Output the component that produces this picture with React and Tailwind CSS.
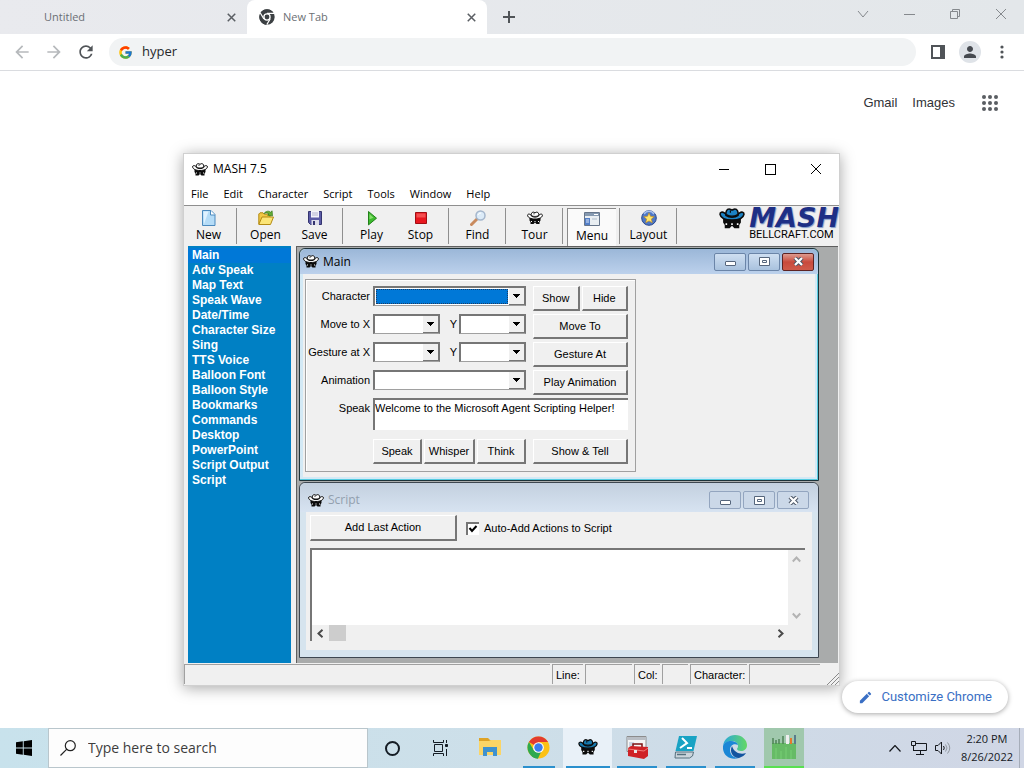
import { useState } from 'react';
import { FcGoogle } from 'react-icons/fc';
import { MdArrowBack, MdArrowForward, MdEdit, MdPerson, MdRefresh } from 'react-icons/md';

const MENU_ITEMS = ['File', 'Edit', 'Character', 'Script', 'Tools', 'Window', 'Help'];

const SECTIONS = [
    'Main', 'Adv Speak', 'Map Text', 'Speak Wave', 'Date/Time', 'Character Size', 'Sing', 'TTS Voice',
    'Balloon Font', 'Balloon Style', 'Bookmarks', 'Commands', 'Desktop', 'PowerPoint', 'Script Output', 'Script',
];

// spy with a wide hat and dark glasses
const AgentIcon = ({ className, fill = '#ffffff' }) => (
    <svg className={className} viewBox="0 0 32 26" aria-hidden="true">
        <path d="M5 13h22v5l-2 3v4h-6l-3-3-3 3H7v-4l-2-3z" fill="#0b0b0b" />
        <path d="M8 19h2v2H8zM22 19h2v2h-2zM15 19h2v2h-2z" fill="#fff" />
        <path
            d="M1.200 8C1 5 4 4.500 6.500 6L9 8c4 3 10 3 14 0l2.500-2C28 4.500 31 5 30.800 8 30 12.500 24 15 16 15S2 12.500 1.200 8Z"
            fill={fill}
            stroke="#0b0b0b"
            strokeWidth="2"
        />
        <path
            d="M8.500 9C8 4.500 9.500 1.200 12.500 1.200c1.500 0 2 1.300 3.500 1.300s2-1.300 3.500-1.300c3 0 4.500 3.300 4 7.800-4 3-11 3-15 0Z"
            fill={fill}
            stroke="#0b0b0b"
            strokeWidth="2"
        />
        <path d="M9 8c4 2.500 10 2.500 14 0M14 3v3" fill="none" stroke="#0b0b0b" strokeWidth="1.500" />
    </svg>
);

const CrossIcon = ({ className }) => (
    <svg className={className} viewBox="0 0 12 12" fill="none" stroke="currentColor" aria-hidden="true">
        <path d="M1 1 11 11M11 1 1 11" />
    </svg>
);

const ChromeIcon = ({ className, mono }) => (
    <svg className={className} viewBox="0 0 24 24" aria-hidden="true">
        <circle cx="12" cy="12" r="11.5" fill={mono ? '#3c4043' : '#fbc116'} />
        <path d="M12 12 2 6.3A11.5 11.5 0 0 1 22 6.3H12Z" fill={mono ? '#3c4043' : '#e33b2e'} />
        <path d="M2 6.3 7.3 15 12 17 11.5 23.5A11.5 11.5 0 0 1 2 6.3Z" fill={mono ? '#3c4043' : '#2da94f'} />
        <path d="M7.3 15 12 17.5 15 16 11.4 23.5A11 11 0 0 1 5 21Z" fill={mono ? '#3c4043' : '#2da94f'} />
        {mono && <path d="M12 6.5h10.5M7.3 15 2 6M16.7 15l-5 8.5" stroke="#fff" strokeWidth="1.8" />}
        <circle cx="12" cy="12" r="5.6" fill="#fff" />
        <circle cx="12" cy="12" r={mono ? 3.6 : 4.4} fill={mono ? '#3c4043' : '#3b7ded'} />
    </svg>
);

const BrowserTab = ({ title, active, children }) => (
    <div className={`flex h-[34px] items-center pr-2 text-[11px] text-[#6b6f74] ${active ? 'w-60 rounded-t-lg bg-white pl-3' : 'w-[247px] pl-11'}`}>
        {children}
        <span className="flex-1">{title}</span>
        <button type="button" aria-label={`Close ${title}`} className="flex size-4 items-center justify-center text-[#5a5e63]">
            <CrossIcon className="size-[9px] stroke-2" />
        </button>
    </div>
);

const TabStrip = () => (
    <div className="flex h-[34px] bg-gradient-to-r from-[#e9eaee] to-[#e3e7ea]">
        <BrowserTab title="Untitled" />
        <BrowserTab title="New Tab" active>
            <ChromeIcon className="mr-2 size-4" mono />
        </BrowserTab>
        <button type="button" aria-label="New tab" className="ml-3 flex w-5 items-center justify-center text-[#505458]">
            <svg className="size-3" viewBox="0 0 12 12" stroke="currentColor" strokeWidth="2"><path d="M6 0v12M0 6h12" /></svg>
        </button>
        <div className="ml-auto flex h-7 text-[#85898d]">
            <button type="button" aria-label="Search tabs" className="flex w-[46px] items-center justify-center">
                <svg className="size-3" viewBox="0 0 12 12" fill="none" stroke="currentColor"><path d="m1 3 5 6 5-6" /></svg>
            </button>
            <button type="button" aria-label="Minimize" className="flex w-[46px] items-center justify-center">
                <span className="h-px w-[11px] bg-[#85898d]" />
            </button>
            <button type="button" aria-label="Restore" className="flex w-[46px] items-center justify-center">
                <svg className="size-3" viewBox="0 0 12 12" fill="none" stroke="currentColor"><path d="M1.5 3.5h7v7h-7zM3.5 3.5v-2h7v7h-2" /></svg>
            </button>
            <button type="button" aria-label="Close" className="flex w-[46px] items-center justify-center">
                <CrossIcon className="size-3" />
            </button>
        </div>
    </div>
);

const AddressBar = () => {
    const [query, setQuery] = useState('hyper');

    return (
        <div className="flex h-[37px] items-center border-b border-[#dadce0] bg-white pl-3 pr-[14px]">
            <button type="button" aria-label="Back" className="w-8 text-[#b6b9bc]"><MdArrowBack size={20} /></button>
            <button type="button" aria-label="Forward" className="w-8 text-[#b6b9bc]"><MdArrowForward size={20} /></button>
            <button type="button" aria-label="Reload" className="w-[33px] text-[#505458]"><MdRefresh size={20} /></button>
            <label className="flex h-7 flex-1 items-center gap-[9px] rounded-full bg-[#f1f3f4] pl-[9px]">
                <FcGoogle size={15} aria-label="Google" />
                <input
                    aria-label="Address and search bar"
                    className="min-w-0 flex-1 bg-transparent text-[13px] text-[#26282b] outline-none"
                    value={query}
                    onChange={(e) => setQuery(e.target.value)}
                />
            </label>
            <button type="button" aria-label="Side panel" className="ml-[15px] text-[#505458]">
                <svg className="size-[14px]" viewBox="0 0 14 14"><path d="M0 0h14v14H0zM2 2v10h7V2z" fill="currentColor" fillRule="evenodd" /></svg>
            </button>
            <button type="button" aria-label="Profile" className="ml-[14px] flex size-[22px] items-center justify-center rounded-full bg-[#dfe3e8] text-[#464a50]">
                <MdPerson size={18} />
            </button>
            <button type="button" aria-label="More" className="ml-[13px] flex w-4 flex-col items-center gap-0.5 text-[#505458]">
                <svg className="h-[14px] w-1" viewBox="0 0 4 14" fill="currentColor"><circle cx="2" cy="2" r="1.6" /><circle cx="2" cy="7" r="1.6" /><circle cx="2" cy="12" r="1.6" /></svg>
            </button>
        </div>
    );
};

/* ---------- toolbar ---------- */

const NewIcon = () => (
    <svg className="h-4 w-4" viewBox="0 0 16 16"><path d="M1.5 .5h8.5l4 4v11H1.5z" fill="#b5dcf7" stroke="#4b89bd" /><path d="M2.500 1.500h5L3 14z" fill="#e0f2ff" /><path d="M9.500 .5v4.500h4.500" fill="#fff" stroke="#4b89bd" /></svg>
);
const OpenIcon = () => (
    <svg className="h-4 w-4" viewBox="0 0 16 16"><path d="M.8 14V4l1.200-1.200h3l1.300 1.400H12v4" fill="#f0c845" stroke="#b38a12" /><path d="M.8 14.500 4 7h11.500l-3 7.500z" fill="#fbe577" stroke="#b38a12" /><path d="M6 3.500C8 .8 11 .6 12.600 2.200l1.500-1.400.4 5-4.800-.5L11 4C9.800 2.800 8 2.600 6 3.500Z" fill="#63ad35" stroke="#35781a" strokeWidth=".7" /></svg>
);
const SaveIcon = () => (
    <svg className="h-4 w-4" viewBox="0 0 16 16"><path d="M1.500 1.500h13v13h-11l-2-2z" fill="#5b5ba6" stroke="#34346f" /><path d="M4 1h8v6.500H4z" fill="#f3f3fb" /><path d="M5 3h6M5 5h6" stroke="#b2b2ce" /><path d="M4.500 10h7.500v5H4.500z" fill="#dedeea" /><path d="M6 11h2v4H6z" fill="#34346f" /></svg>
);
const PlayIcon = () => (
    <svg className="h-4 w-4" viewBox="0 0 16 16"><path d="m4.500 1.500 8 6.700-8 6.700z" fill="#3dbb2e" stroke="#22801a" /><path d="m5.500 4 4 3.800-4 1.500z" fill="#86df6c" /></svg>
);
const StopIcon = () => (
    <svg className="h-4 w-4" viewBox="0 0 16 16"><path d="M2.500 2.500h11v11h-11z" fill="#e8171f" stroke="#a20d12" /><path d="M3.500 3.500h9v4h-9z" fill="#f44f50" /></svg>
);
const FindIcon = () => (
    <svg className="h-4 w-4" viewBox="0 0 16 16"><path d="m1.500 14.500 6-6" stroke="#c98a5d" strokeWidth="3" strokeLinecap="round" /><circle cx="10.500" cy="5.500" r="4.500" fill="#dcebf8" stroke="#a4b6cc" strokeWidth="1.500" /><path d="M8 5a3 3 0 0 1 3-2" stroke="#fff" fill="none" /></svg>
);
const MenuIcon = () => (
    <svg className="h-4 w-4" viewBox="0 0 16 16"><path d="M.5 1.500h15v13H.5z" fill="#e9eef2" stroke="#66758a" /><path d="M1 2h14v3H1z" fill="#8599b0" /><path d="M10 3.500h4" stroke="#fff" /><path d="M1 7h5v7H1z" fill="#527ec6" /><path d="M2 9h3M2 11h3" stroke="#dbe6fa" /><path d="M8 8h5" stroke="#aebdcc" /></svg>
);
const LayoutIcon = () => (
    <svg className="h-4 w-4" viewBox="0 0 16 16"><circle cx="8" cy="8" r="7.300" fill="#4e78c7" stroke="#28488e" /><path d="M3 4a6 6 0 0 1 10 0" stroke="#a9c2ee" strokeWidth="1.500" fill="none" /><path d="m8 2.800 1.500 3.500 3.800.3-2.900 2.500.9 3.700L8 10.900l-3.300 1.900.9-3.700L2.700 6.600l3.800-.3z" fill="#ffe56a" stroke="#b7821c" strokeWidth=".6" /></svg>
);

const TOOL_GROUPS = [
    [['New', <NewIcon />]],
    [['Open', <OpenIcon />], ['Save', <SaveIcon />]],
    [['Play', <PlayIcon />], ['Stop', <StopIcon />]],
    [['Find', <FindIcon />]],
    [['Tour', <AgentIcon className="h-4 w-4" />]],
    [['Menu', <MenuIcon />]],
    [['Layout', <LayoutIcon />]],
];

const Toolbar = () => (
    <div className="flex h-[41px] border-t border-[#8f8f8f] bg-[#f0f0f0]">
        {TOOL_GROUPS.map((group, i) => (
            <div key={i} className="flex">
                {group.map(([label, icon]) => (
                    <button
                        key={label}
                        type="button"
                        className={`flex w-[49px] flex-col items-center gap-px text-xs leading-4 ${label === 'Menu' ? 'mt-0.5 border-l border-t border-[#8a8a8a] bg-[#fafafa] pt-0.5' : 'pt-1'}`}
                    >
                        {icon}
                        {label}
                    </button>
                ))}
                <div className="my-0.5 ml-[3px] mr-1 w-px bg-[#8f8f8f]" />
            </div>
        ))}
        <div className="ml-auto flex gap-1">
            <AgentIcon className="mt-0.5 h-[21px] w-[26px]" fill="#1c82c4" />
            <div className="flex flex-col">
                <span className="h-[23px] font-['DejaVu_Sans'] text-[27px] font-bold italic leading-6 text-[#1e2f85] [text-shadow:1px_1px_1px_#7f9ac8]">MASH</span>
                <span className="font-[Roboto] text-[11px] leading-3">BELLCRAFT.COM</span>
            </div>
        </div>
    </div>
);

/* ---------- form pieces ---------- */

const Raised = ({ children, className = '' }) => (
    <button
        type="button"
        className={`border-b-2 border-l border-r-2 border-t border-b-[#767676] border-l-white border-r-[#767676] border-t-white bg-[#f0f0f0] ${className}`}
    >
        {children}
    </button>
);

const Combo = ({ id, label, className = '', highlighted }) => (
    <div className={`flex h-5 border-b border-l-2 border-r border-t-2 border-b-[#a0a0a0] border-l-[#767676] border-r-[#767676] border-t-[#767676] bg-white ${className}`}>
        <select
            id={id}
            aria-label={label}
            className={`min-w-0 flex-1 appearance-none outline-none ${highlighted ? 'm-px border border-dotted border-[#1b3d66] bg-[#0078d7]' : 'bg-white'}`}
        >
            <option value=""></option>
        </select>
        <span className="flex w-4 items-center justify-center border-b border-r border-[#767676] bg-[#f0f0f0]">
            <svg className="h-1 w-[7px]" viewBox="0 0 7 4" shapeRendering="crispEdges"><path d="M0 0h7L3.500 4z" /></svg>
        </span>
    </div>
);

const FieldLabel = ({ htmlFor, children }) => (
    <label htmlFor={htmlFor} className="w-16 shrink-0 whitespace-nowrap text-right leading-5">{children}</label>
);

const PointFields = ({ id, label }) => (
    <>
        <FieldLabel htmlFor={id}>{label}</FieldLabel>
        <div className="ml-[3px] mr-[7px] flex w-[153px] justify-between">
            <Combo id={id} className="w-[67px]" />
            <div className="flex gap-0.5">
                <label htmlFor={`${id}-y`} className="leading-5">Y</label>
                <Combo id={`${id}-y`} className="w-[67px]" />
            </div>
        </div>
    </>
);

const CHILD_BUTTON = 'flex h-[18px] w-8 items-center justify-center rounded-[2px] border';

const ChildButtons = ({ title, active }) => {
    const tone = active
        ? 'border-[#6b85a8] bg-gradient-to-b from-[#cfdff1] to-[#a9c2de]'
        : 'border-[#93a5bf] bg-[#cbd8e8]';
    const closeTone = active ? 'border-[#5d2323] bg-gradient-to-b from-[#dd9a8f] via-[#c8493c] to-[#cf5a4a]' : tone;

    return (
        <div className="ml-auto flex gap-0.5">
            <button type="button" aria-label={`Minimize ${title}`} className={`${CHILD_BUTTON} ${tone}`}>
                <span className="mt-1 h-[5px] w-[11px] rounded-[1px] border border-[#56667c] bg-white" />
            </button>
            <button type="button" aria-label={`Maximize ${title}`} className={`${CHILD_BUTTON} ${tone}`}>
                <svg className="h-[9px] w-[11px]" viewBox="0 0 11 9" fill="#fff" stroke="#56667c"><path d="M.5.5h10v8H.5z" /><path d="M3.500 3.500h4v2h-4z" /></svg>
            </button>
            <button type="button" aria-label={`Close ${title}`} className={`${CHILD_BUTTON} ${closeTone}`}>
                <svg className="h-[9px] w-[11px]" viewBox="0 0 11 9" fill="none">
                    <path d="m2 1 7 7m0-7-7 7" stroke="#4b5666" strokeWidth="4.200" />
                    <path d="m2 1 7 7m0-7-7 7" stroke="#fff" strokeWidth="2.200" />
                </svg>
            </button>
        </div>
    );
};

const MainWindow = () => (
    <section className="rounded-t-md border border-[#1d3238] bg-[#d3e9f5] px-[3px] pb-[3px] shadow-[inset_0_-1px_0_#55cbe0,inset_-1px_0_0_#55cbe0]">
        <header className="-mx-[3px] flex h-[25px] items-center rounded-t-md bg-gradient-to-b from-[#9bb7d8] to-[#bcd1ec] pl-[3px] pr-1">
            <AgentIcon className="mr-1 h-[13px] w-4" />
            <h2 className="text-xs">Main</h2>
            <ChildButtons title="Main" active />
        </header>
        <form className="bg-[#f0f0f0] py-[5px] pl-[2px] font-['Liberation_Sans'] text-[11px]">
            <fieldset className="flex w-[331px] flex-col gap-[3px] border border-[#a0a0a0] pb-[7px] pr-[7px] pt-1.5 shadow-[inset_1px_1px_0_#fff]">
                <div className="flex">
                    <FieldLabel htmlFor="character">Character</FieldLabel>
                    <Combo id="character" className="ml-[3px] mr-[7px] w-[153px]" highlighted />
                    <div className="flex h-[25px] flex-1 gap-0.5">
                        <Raised className="flex-1">Show</Raised>
                        <Raised className="flex-1">Hide</Raised>
                    </div>
                </div>
                <div className="flex">
                    <PointFields id="move-x" label="Move to X" />
                    <Raised className="h-[25px] flex-1">Move To</Raised>
                </div>
                <div className="flex">
                    <PointFields id="gesture-x" label="Gesture at X" />
                    <Raised className="h-[25px] flex-1">Gesture At</Raised>
                </div>
                <div className="flex">
                    <FieldLabel htmlFor="animation">Animation</FieldLabel>
                    <Combo id="animation" className="ml-[3px] mr-[7px] w-[153px]" />
                    <Raised className="h-[25px] flex-1">Play Animation</Raised>
                </div>
                <div className="flex">
                    <FieldLabel htmlFor="speak">Speak</FieldLabel>
                    <textarea
                        id="speak"
                        className="ml-[3px] h-8 flex-1 resize-none whitespace-nowrap border-l-2 border-t-2 border-[#767676] bg-white leading-4 outline-none"
                        defaultValue="Welcome to the Microsoft Agent Scripting Helper!"
                    />
                </div>
                <div className="mt-1.5 flex h-[25px] pl-[67px]">
                    <div className="mr-[7px] flex w-[153px] gap-0.5">
                        <Raised className="w-[49px]">Speak</Raised>
                        <Raised className="flex-1">Whisper</Raised>
                        <Raised className="w-[49px]">Think</Raised>
                    </div>
                    <Raised className="flex-1">Show &amp; Tell</Raised>
                </div>
            </fieldset>
        </form>
    </section>
);

const Chevron = ({ className = '' }) => (
    <svg className={`h-[7px] w-[9px] ${className}`} viewBox="0 0 9 7" fill="none" stroke="currentColor" strokeWidth="2" aria-hidden="true">
        <path d="M.8 5.500 4.500 1.500 8.200 5.500" />
    </svg>
);

const ScriptWindow = () => {
    const [autoAdd, setAutoAdd] = useState(true);

    return (
        <section className="rounded-t-md border border-[#3d4650] bg-[#d6e4ee] px-[6px] pb-[7px]">
            <header className="-mx-[6px] flex h-[29px] items-center rounded-t-md bg-gradient-to-b from-[#c3d0df] to-[#d7e3f1] pl-2 pr-[9px] pt-[5px]">
                <AgentIcon className="mr-1 h-[13px] w-4" />
                <h2 className="text-xs text-[#929fae]">Script</h2>
                <ChildButtons title="Script" />
            </header>
            <div className="flex flex-col gap-[7px] bg-[#f0f0f0] pb-[9px] pl-1 pr-[7px] pt-[3px] font-['Liberation_Sans'] text-[11px]">
                <div className="flex">
                    <Raised className="h-[26px] w-[147px]">Add Last Action</Raised>
                    <label className="ml-[9px] flex items-center gap-[5px]">
                        <span className="relative flex size-[13px]">
                            <input
                                type="checkbox"
                                checked={autoAdd}
                                onChange={(e) => setAutoAdd(e.target.checked)}
                                className="peer size-[13px] appearance-none border-l-2 border-t-2 border-[#767676] bg-white"
                            />
                            <svg className="pointer-events-none absolute inset-0 hidden size-[13px] peer-checked:block" viewBox="0 0 13 13" fill="none" stroke="#000" strokeWidth="2">
                                <path d="m3.500 6 2.500 3 4.500-5" />
                            </svg>
                        </span>
                        Auto-Add Actions to Script
                    </label>
                </div>
                <div className="flex flex-col border-l-2 border-t-2 border-[#767676]">
                    <div className="flex h-[75px]">
                        <textarea aria-label="Script text" className="flex-1 resize-none bg-white outline-none" />
                        <div className="flex w-[17px] flex-col items-center justify-between bg-[#f0f0f0] py-1.5 text-[#b3b3b3]">
                            <Chevron />
                            <Chevron className="rotate-180" />
                        </div>
                    </div>
                    <div className="flex h-4 items-center bg-[#f0f0f0] pr-5 text-[#4a4a4a]">
                        <Chevron className="ml-1 -rotate-90" />
                        <span className="ml-1 h-4 w-[17px] bg-[#cdcdcd]" />
                        <Chevron className="ml-auto rotate-90" />
                    </div>
                </div>
            </div>
        </section>
    );
};

const StatusCell = ({ className = '', children }) => (
    <span className={`h-5 border-l border-t border-[#a0a0a0] pl-[3px] leading-5 ${className}`}>{children}</span>
);

const MashWindow = () => (
    <article className="absolute left-[183px] right-[184px] top-[82px] border border-[#d0d0d0] bg-[#f0f0f0] text-black shadow-[0_2px_14px_rgba(0,0,0,0.35)]">
        <header className="flex h-[30px] items-center bg-white pl-2">
            <AgentIcon className="mr-[5px] h-[13px] w-4" />
            <h1 className="text-xs">MASH 7.5</h1>
            <div className="ml-auto flex h-full">
                <button type="button" aria-label="Minimize MASH" className="flex w-[46px] items-center justify-center"><span className="h-px w-[10px] bg-black" /></button>
                <button type="button" aria-label="Maximize MASH" className="flex w-[46px] items-center justify-center"><span className="size-[11px] border border-black" /></button>
                <button type="button" aria-label="Close MASH" className="flex w-[46px] items-center justify-center"><CrossIcon className="size-3" /></button>
            </div>
        </header>
        <nav className="flex h-[21px] items-center gap-[15px] bg-white px-[7px] text-[11px]">
            {MENU_ITEMS.map((item) => (
                <button key={item} type="button">{item}</button>
            ))}
        </nav>
        <Toolbar />
        <div className="flex h-[417px] pl-1">
            <ul className="w-[103px] bg-[#0080c4] pt-0.5 font-['Liberation_Sans'] text-xs font-bold leading-[15px] text-white">
                {SECTIONS.map((section) => (
                    <li key={section} className={section === 'Main' ? 'bg-[#0078d7]' : ''}>
                        <button type="button" className="block w-full pl-1 text-left">{section}</button>
                    </li>
                ))}
            </ul>
            <div className="ml-[5px] mr-px flex flex-1 flex-col gap-px border-l border-t border-[#5f5f5f] bg-[#a9abab] pl-[2px] pr-[19px] pt-px">
                <MainWindow />
                <ScriptWindow />
            </div>
        </div>
        <footer className="flex h-[22px] gap-0.5 pt-px font-['Liberation_Sans'] text-[11px]">
            <StatusCell className="flex-1" />
            <StatusCell className="w-[31px]">Line:</StatusCell>
            <StatusCell className="w-[47px]" />
            <StatusCell className="w-[26px]">Col:</StatusCell>
            <StatusCell className="w-[26px]" />
            <StatusCell className="w-[57px]">Character:</StatusCell>
            <StatusCell className="w-[71px]" />
            <svg className="ml-[5px] size-3 self-end" viewBox="0 0 12 12" stroke="#8a8a8a"><path d="M0 12 12 0M4 12l8-8M8 12l4-4" /></svg>
        </footer>
    </article>
);

/* ---------- taskbar ---------- */

const FolderIcon = () => (
    <svg className="h-5 w-[22px]" viewBox="0 0 22 20"><path d="M0 1h9l2 2h10v5H0z" fill="#dfa325" /><path d="M0 4h10l2-1h10v15H0z" fill="#fbd566" /><path d="M4 10h14v9h-4v-4H8v4H4z" fill="#3f92cf" /></svg>
);
const ToolboxIcon = () => (
    <svg className="size-6" viewBox="0 0 24 24"><path d="M2 1.500h19v15H2z" fill="#f5f5f5" stroke="#8c8c8c" /><path d="M2 2h19v3H2z" fill="#b9bec4" /><path d="M4 7h5v6H4z" fill="#c9d4e2" /><path d="M8 12V9h9v3" fill="none" stroke="#7d1111" strokeWidth="1.500" /><path d="m3 13 3-2 17 1v9l-4 3-16-3z" fill="#cf2226" /><path d="m3 14 16 2 4-3" stroke="#f37b78" fill="none" /><path d="M9 15h3v3H9z" fill="#e8e8e8" /></svg>
);
const PowerShellIcon = () => (
    <svg className="size-6" viewBox="0 0 24 24"><path d="M5 1h18l-3.500 15H1.500z" fill="#19a3c4" /><path d="m8 3 5 5-7 5M13 13h5" fill="none" stroke="#fff" strokeWidth="2" /><path d="M1.500 17h18l-1 4-3 2H1z" fill="#cbd5dc" stroke="#56707e" /><path d="M3 19.500h9" stroke="#56707e" strokeWidth="1.500" /></svg>
);
const EdgeIcon = () => (
    <svg className="size-6" viewBox="0 0 24 24">
        <defs>
            <linearGradient id="edge-top" x1="0" x2="1"><stop stopColor="#28a7dc" /><stop offset="1" stopColor="#64d864" /></linearGradient>
        </defs>
        <path d="M0 11C1 4 6 0 12 0c7 0 12 5 12 10 0 4-3 6-6 6-2 0-4-1-4-2s1-1 1-3c0-3-3-5-6-5C5 6 1 8 0 11Z" fill="url(#edge-top)" />
        <path d="M0 11c1-3 4-5 8-5 3 0 6 1 7 4-5-2-8 1-8 5 0 5 4 8 9 8C7 26-1 20 0 11Z" fill="#1b87d6" />
        <path d="M9 11c-3 6 1 12 7 12 3-1 6-3 7-5-5 2-12 0-14-7Z" fill="#12539f" />
    </svg>
);
const MonitorIcon = () => (
    <svg className="size-6" viewBox="0 0 24 24"><path d="M0 8h24v16H0z" fill="#66bb66" /><path d="M1 3v6M4 5v4M7 4v5M11 1v8" stroke="#4d8356" strokeWidth="1.500" /><path d="M14 0h3v9h-3z" fill="#eee" /><path d="M18 3h2v6h-2z" fill="#e5782c" /><path d="M22 0h2v9h-2z" fill="#597b8b" /><path d="M4 24V13M9 24V16M14 24V12M19 24V15" stroke="#77cf74" /></svg>
);

const TaskButton = ({ label, className = '', bar, children }) => (
    <button type="button" aria-label={label} className={`flex w-[49px] flex-col items-center ${className}`}>
        <span className="flex flex-1 items-center">{children}</span>
        <span className={`h-0.5 ${bar || ''}`} />
    </button>
);

const Taskbar = () => (
    <footer className="flex h-10 bg-gradient-to-r from-[#c8e2ec] via-[#cddfe9] to-[#d0d6e5] text-black">
        <button type="button" aria-label="Start" className="flex w-12 items-center justify-center">
            <svg className="size-4" viewBox="0 0 16 16"><path d="M0 2.300 6.800 1.300v6.300H0zM7.700 1.200 16 0v7.600H7.700zM0 8.400h6.800v6.300L0 13.700zM7.700 8.400H16V16l-8.300-1.200z" /></svg>
        </button>
        <label className="flex w-80 items-center gap-3 border border-[#b9c6cc] bg-[#fdfdfd] pl-[11px]">
            <svg className="size-4" viewBox="0 0 16 16" fill="none" stroke="#222" strokeWidth="1.200"><circle cx="10.300" cy="5.700" r="5" /><path d="m6.800 9.200-6.300 6.300" /></svg>
            <input aria-label="Search" placeholder="Type here to search" className="min-w-0 flex-1 bg-transparent text-sm outline-none placeholder:text-[#3d3d3d]" />
        </label>
        <button type="button" aria-label="Cortana" className="flex w-12 items-center justify-center">
            <span className="size-[15px] rounded-full border-2 border-[#141c24]" />
        </button>
        <button type="button" aria-label="Task View" className="flex w-[49px] items-center justify-center">
            <svg className="size-4" viewBox="0 0 16 16" fill="none" stroke="#141c24"><path d="M.5 0v2.500h10V0M.5 16v-2.500h10V16M1.500 4.500h8v7h-8zM13.500 0v3M13.500 9v7" /><path d="M12.500 4.500h2v2h-2z" fill="#141c24" /></svg>
        </button>
        <TaskButton label="File Explorer"><FolderIcon /></TaskButton>
        <TaskButton label="Google Chrome" bar="w-8 bg-[#2a90cd]"><ChromeIcon className="size-[23px]" /></TaskButton>
        <TaskButton label="MASH" className="bg-[#e9f1f8]" bar="w-11 bg-[#2a90cd]"><AgentIcon className="h-4 w-5" fill="#1779ad" /></TaskButton>
        <TaskButton label="Server Tools" bar="w-10 bg-[#2a90cd]"><ToolboxIcon /></TaskButton>
        <TaskButton label="PowerShell" bar="w-10 bg-[#2a90cd]"><PowerShellIcon /></TaskButton>
        <TaskButton label="Microsoft Edge" bar="w-10 bg-[#2a90cd]"><EdgeIcon /></TaskButton>
        <button type="button" aria-label="Performance Monitor" className="ml-[5px] flex w-10 flex-col items-center bg-[#a0c8ad]">
            <span className="flex flex-1 items-center"><MonitorIcon /></span>
            <span className="h-0.5 w-full bg-[#58e050]" />
        </button>
        <div className="ml-auto flex items-center text-[#15181d]">
            <svg className="h-[7px] w-3" viewBox="0 0 12 7" fill="none" stroke="currentColor" strokeWidth="1.200"><path d="m.5 6.500 5.500-6 5.500 6" /></svg>
            <svg className="ml-[10px] size-4" viewBox="0 0 16 16" fill="none" stroke="currentColor"><path d="M4.500 3.500h11v7h-11M.5 1.500h4v4h-4zM2.500 6v5M9.500 11v3M5 14.500h8M2.500 10.500h3" /></svg>
            <svg className="ml-2 h-[14px] w-4" viewBox="0 0 16 14" fill="none" stroke="currentColor"><path d="M.5 4.500h2.500l3.500-3.500v12L3 9.500H.5z" /><path d="M8.500 5q1.500 2 0 4" /><path d="M10.500 3.500q3 3.500 0 7M12.500 1.500q4.500 5.500 0 11" stroke="#90979f" /></svg>
            <div className="ml-[10px] mr-1.5 flex flex-col items-center text-[11px] leading-[18px]">
                <time>2:20 PM</time>
                <span>8/26/2022</span>
            </div>
            <div className="mr-1 h-10 w-px bg-[#a6adb9]" />
        </div>
    </footer>
);

export default function App() {
    return (
        <div className="flex min-h-screen flex-col bg-white font-['Open_Sans',sans-serif]">
            <TabStrip />
            <AddressBar />
            <main className="relative min-h-[656px] flex-1">
                <div className="flex items-center justify-end gap-[15px] pr-[26px] pt-6 font-['Liberation_Sans'] text-[13px] leading-4 text-[#303236]">
                    <a href="#gmail">Gmail</a>
                    <a href="#images">Images</a>
                    <button type="button" aria-label="Google apps" className="ml-3 text-[#5a5e63]">
                        <svg className="size-4" viewBox="0 0 16 16" fill="currentColor">
                            {[2, 8, 14].map((y) => [2, 8, 14].map((x) => <circle key={`${x}-${y}`} cx={x} cy={y} r="2" />))}
                        </svg>
                    </button>
                </div>
                <MashWindow />
                <button
                    type="button"
                    className="absolute bottom-[15px] right-4 flex h-8 items-center gap-2 rounded-full bg-white px-4 font-[Roboto] text-[13px] text-[#3a6fc4] shadow-[0_1px_5px_rgba(0,0,0,0.35)]"
                >
                    <MdEdit size={15} />
                    Customize Chrome
                </button>
            </main>
            <Taskbar />
        </div>
    );
}
